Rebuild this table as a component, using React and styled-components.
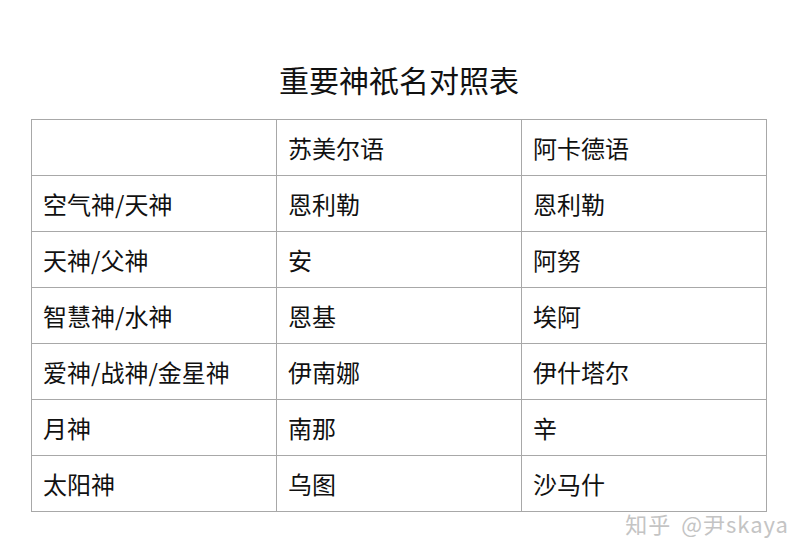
import React from 'react'
import styled, { createGlobalStyle } from 'styled-components'

const GlobalStyle = createGlobalStyle`
  html, body {
    margin: 0;
    padding: 0;
    background: #fff;
  }
  body {
    font-family: "Noto Sans CJK SC", "Noto Sans", sans-serif;
  }
`

const Page = styled.div`
  position: relative;
  width: 810px;
  height: 560px;
  padding: 58px 0 0 31px;
  box-sizing: border-box;
  color: #111;
`

const Title = styled.h1`
  width: 736px;
  margin: 0 0 19px;
  text-align: center;
  font-size: 30px;
  font-weight: 400;
  line-height: 42px;
`

const Table = styled.table`
  width: 736px;
  border-collapse: collapse;
  table-layout: fixed;
`

const Cell = styled.td`
  height: 56px;
  padding: 0 11px;
  border: 1px solid #a8a8a8;
  font-size: 24px;
  line-height: 1;
  vertical-align: middle;
  box-sizing: border-box;
`

const Watermark = styled.div`
  position: absolute;
  right: 21px;
  bottom: 21px;
  font-size: 22px;
  color: #c4c4c4;
  letter-spacing: 1px;
  word-spacing: 4px;
  text-shadow: 0 0 1px #fff;
`

const rows = [
  ['', '苏美尔语', '阿卡德语'],
  ['空气神/天神', '恩利勒', '恩利勒'],
  ['天神/父神', '安', '阿努'],
  ['智慧神/水神', '恩基', '埃阿'],
  ['爱神/战神/金星神', '伊南娜', '伊什塔尔'],
  ['月神', '南那', '辛'],
  ['太阳神', '乌图', '沙马什'],
]

const App = () => {
  return (
    <Page>
      <GlobalStyle />
      <Title>重要神祇名对照表</Title>
      <Table>
        <tbody>
          {rows.map((r, i) => (
            <tr key={i}>
              {r.map((c, j) => (
                <Cell key={j}>{c}</Cell>
              ))}
            </tr>
          ))}
        </tbody>
      </Table>
      <Watermark>知乎 @尹skaya</Watermark>
    </Page>
  )
}

export default App
